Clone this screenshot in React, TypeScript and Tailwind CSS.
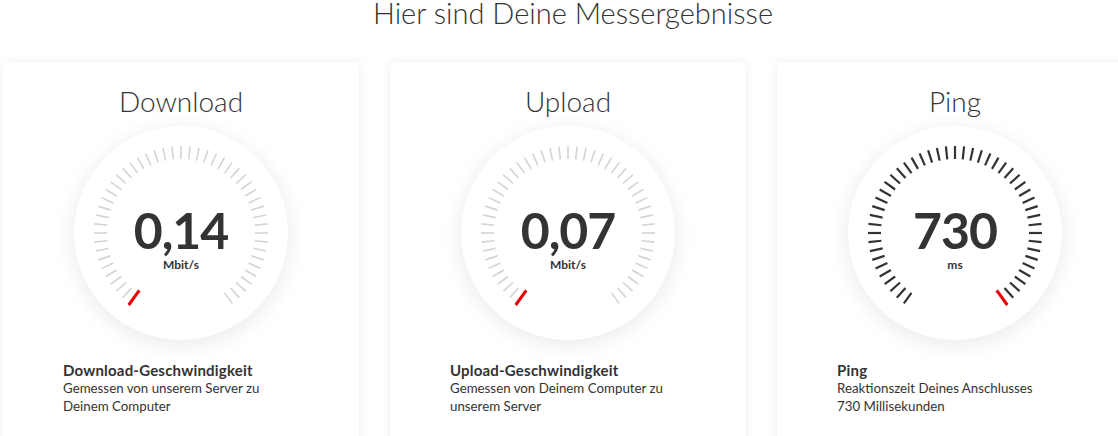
const TICKS = 49;
const START = -144;
const END = 144;

type GaugeProps = {
  value: string;
  unit: string;
  // index of the red marker; ticks before it are dark
  marker: number;
};

function Gauge({ value, unit, marker }: GaugeProps) {
  const c = 107;
  const ticks = [];
  for (let i = 0; i < TICKS; i++) {
    const deg = START + ((END - START) * i) / (TICKS - 1);
    const rad = (deg * Math.PI) / 180;
    const isMarker = i === marker;
    const r1 = isMarker ? 71 : 74;
    const r2 = isMarker ? 89 : 87;
    const sx = Math.sin(rad);
    const sy = -Math.cos(rad);
    ticks.push(
      <line
        key={i}
        x1={c + sx * r1}
        y1={c + sy * r1}
        x2={c + sx * r2}
        y2={c + sy * r2}
        stroke={isMarker ? "#e60000" : i < marker ? "#333333" : "#d4d4d4"}
        strokeWidth={isMarker ? 3 : i < marker ? 2.2 : 1.6}
      />
    );
  }
  return (
    <div className="relative w-[214px] h-[214px] rounded-full bg-white shadow-[0_4px_22px_rgba(0,0,0,0.09)]">
      <svg width="214" height="214" viewBox="0 0 214 214" className="absolute inset-0">
        {ticks}
      </svg>
      <div className="absolute inset-0 flex flex-col items-center justify-center pt-[15px]">
        <div className="text-[50px] font-bold leading-[40px] tracking-[-1px] text-[#333]">{value}</div>
        <div className="text-[12px] font-bold leading-none mt-[9px] text-[#333]">{unit}</div>
      </div>
    </div>
  );
}

type CardProps = {
  title: string;
  value: string;
  unit: string;
  marker: number;
  label: string;
  lines: string[];
};

function Card({ title, value, unit, marker, label, lines }: CardProps) {
  return (
    <div className="w-[356px] h-[400px] shrink-0 rounded-[5px] bg-white shadow-[0_0_12px_rgba(0,0,0,0.07)] flex flex-col">
      <h2 className="text-center text-[28px] font-light leading-none text-[#333] pt-[25px]">{title}</h2>
      <div className="flex justify-center mt-[11px]">
        <Gauge value={value} unit={unit} marker={marker} />
      </div>
      <div className="pl-[60px] mt-[21px] text-[#333]">
        <div className="text-[15px] font-bold leading-[18px] tracking-[0.2px]">{label}</div>
        {lines.map((l) => (
          <div key={l} className="text-[13.3px] leading-[18px]">
            {l}
          </div>
        ))}
      </div>
    </div>
  );
}

export default function App() {
  return (
    <div className="w-[1118px] h-[436px] overflow-hidden bg-white" style={{ fontFamily: "Lato, 'Open Sans', sans-serif" }}>
      <h1 className="text-center text-[29px] font-light leading-[24px] text-[#333] pt-[1px] pl-[28px]">
        Hier sind Deine Messergebnisse
      </h1>
      <div className="flex gap-[31px] pl-[3px] mt-[37px]">
        <Card
          title="Download"
          value="0,14"
          unit="Mbit/s"
          marker={0}
          label="Download-Geschwindigkeit"
          lines={["Gemessen von unserem Server zu", "Deinem Computer"]}
        />
        <Card
          title="Upload"
          value="0,07"
          unit="Mbit/s"
          marker={0}
          label="Upload-Geschwindigkeit"
          lines={["Gemessen von Deinem Computer zu", "unserem Server"]}
        />
        <Card
          title="Ping"
          value="730"
          unit="ms"
          marker={TICKS - 1}
          label="Ping"
          lines={["Reaktionszeit Deines Anschlusses", "730 Millisekunden"]}
        />
      </div>
    </div>
  );
}
